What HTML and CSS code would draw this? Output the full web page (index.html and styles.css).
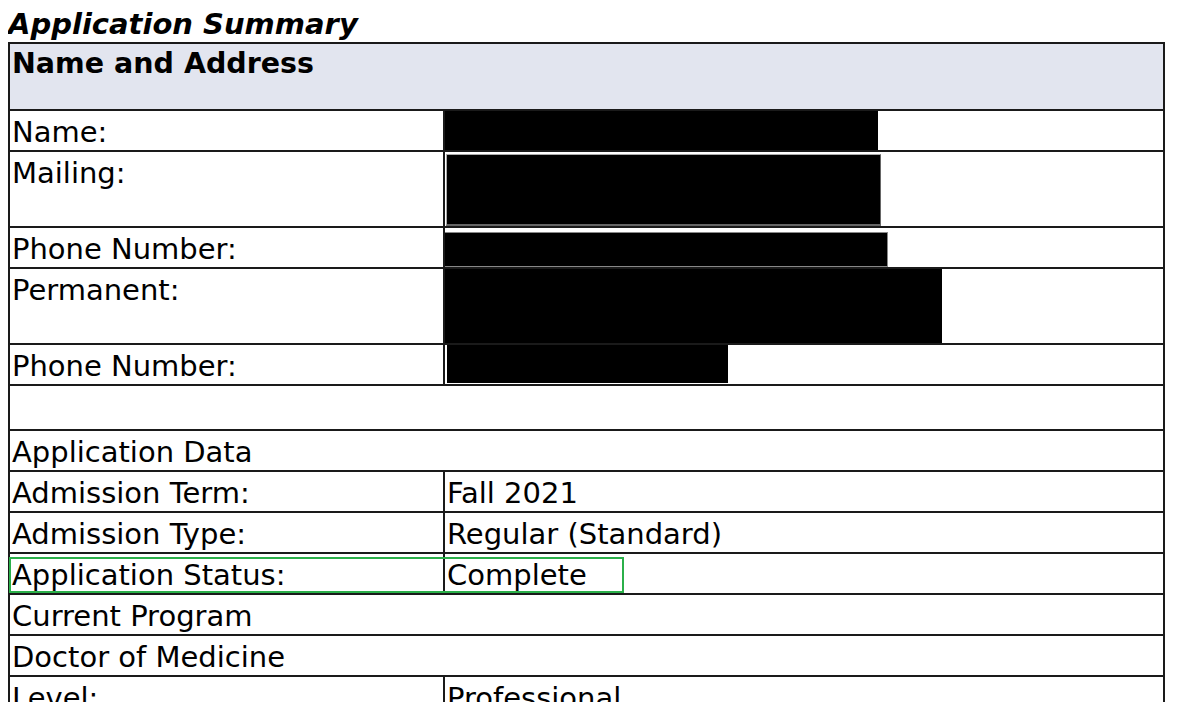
FILE: index.html
```html
<!DOCTYPE html>
<html>
  <head>
    <title>Application Summary</title>
    <meta name="viewport" content="width=device-width, initial-scale=1.0" />
    <link rel="stylesheet" href="styles.css">
  </head>
  <body>
    <h1 class="page-title">Application Summary</h1>

    <table class="summary">
      <tr>
        <th colspan="2">Name and Address</th>
      </tr>
      <tr>
        <td class="label">Name:</td>
        <td class="redacted"><div class="redact redact-name"></div></td>
      </tr>
      <tr>
        <td class="label">Mailing:</td>
        <td class="redacted"><div class="redact redact-mailing"></div></td>
      </tr>
      <tr>
        <td class="label">Phone Number:</td>
        <td class="redacted"><div class="redact redact-phone"></div></td>
      </tr>
      <tr>
        <td class="label">Permanent:</td>
        <td class="redacted"><div class="redact redact-permanent"></div></td>
      </tr>
      <tr>
        <td class="label">Phone Number:</td>
        <td class="redacted"><div class="redact redact-phone2"></div></td>
      </tr>
      <tr>
        <td colspan="2" class="spacer">&nbsp;</td>
      </tr>
      <tr>
        <td colspan="2">Application Data</td>
      </tr>
      <tr>
        <td class="label">Admission Term:</td>
        <td>Fall 2021</td>
      </tr>
      <tr>
        <td class="label">Admission Type:</td>
        <td>Regular (Standard)</td>
      </tr>
      <tr>
        <td class="label status-cell">Application Status:<span class="highlight"></span></td>
        <td>Complete</td>
      </tr>
      <tr>
        <td colspan="2">Current Program</td>
      </tr>
      <tr>
        <td colspan="2">Doctor of Medicine</td>
      </tr>
      <tr>
        <td class="label">Level:</td>
        <td>Professional</td>
      </tr>
      <tr>
        <td class="label">Program:</td>
        <td>Medicine</td>
      </tr>
    </table>
  </body>
</html>
```

FILE: styles.css
```css
body {
  font-family: "DejaVu Sans", Verdana, sans-serif;
  margin: 0 8px;
  background: white;
  color: black;
}
.page-title {
  margin: 0;
  padding-top: 7px;
  font-size: 29px;
  line-height: 35px;
  font-style: italic;
  font-weight: bold;
}
.summary {
  width: 1157px;
  border-collapse: collapse;
  border: 2px solid #1a1a1a;
  font-size: 29px;
}
.summary th,
.summary td {
  border: 2px solid #1a1a1a;
  padding: 3px 2px 0;
  line-height: 36px;
  text-align: left;
  vertical-align: top;
  white-space: nowrap;
}
.summary th {
  background: #e2e5ef;
  height: 63px;
  font-size: 28.5px;
  padding-top: 2px;
}
.label {
  width: 429px;
}
.spacer {
  line-height: 40px !important;
}
.redacted {
  padding: 0 !important;
}
.redact {
  background: black;
}
.redact-name {
  width: 433px;
  height: 39px;
}
.redact-mailing {
  width: 433px;
  height: 69px;
  margin: 2px 0 0 1px;
  border: 1px solid #999;
  border-width: 1px 1px 2px 1px;
  border-color: #aaa #666 #666 #aaa;
}
.redact-phone {
  width: 442px;
  height: 33px;
  margin-top: 4px;
  border: 1px solid #888;
  border-left: none;
}
.redact-permanent {
  width: 497px;
  height: 74px;
}
.redact-phone2 {
  width: 281px;
  height: 38px;
  margin: 0 0 0 2px;
}
.status-cell {
  position: relative;
}
.highlight {
  position: absolute;
  left: -1px;
  top: 3px;
  width: 611px;
  height: 32px;
  border: 2px solid #2bb04a;
}
```
